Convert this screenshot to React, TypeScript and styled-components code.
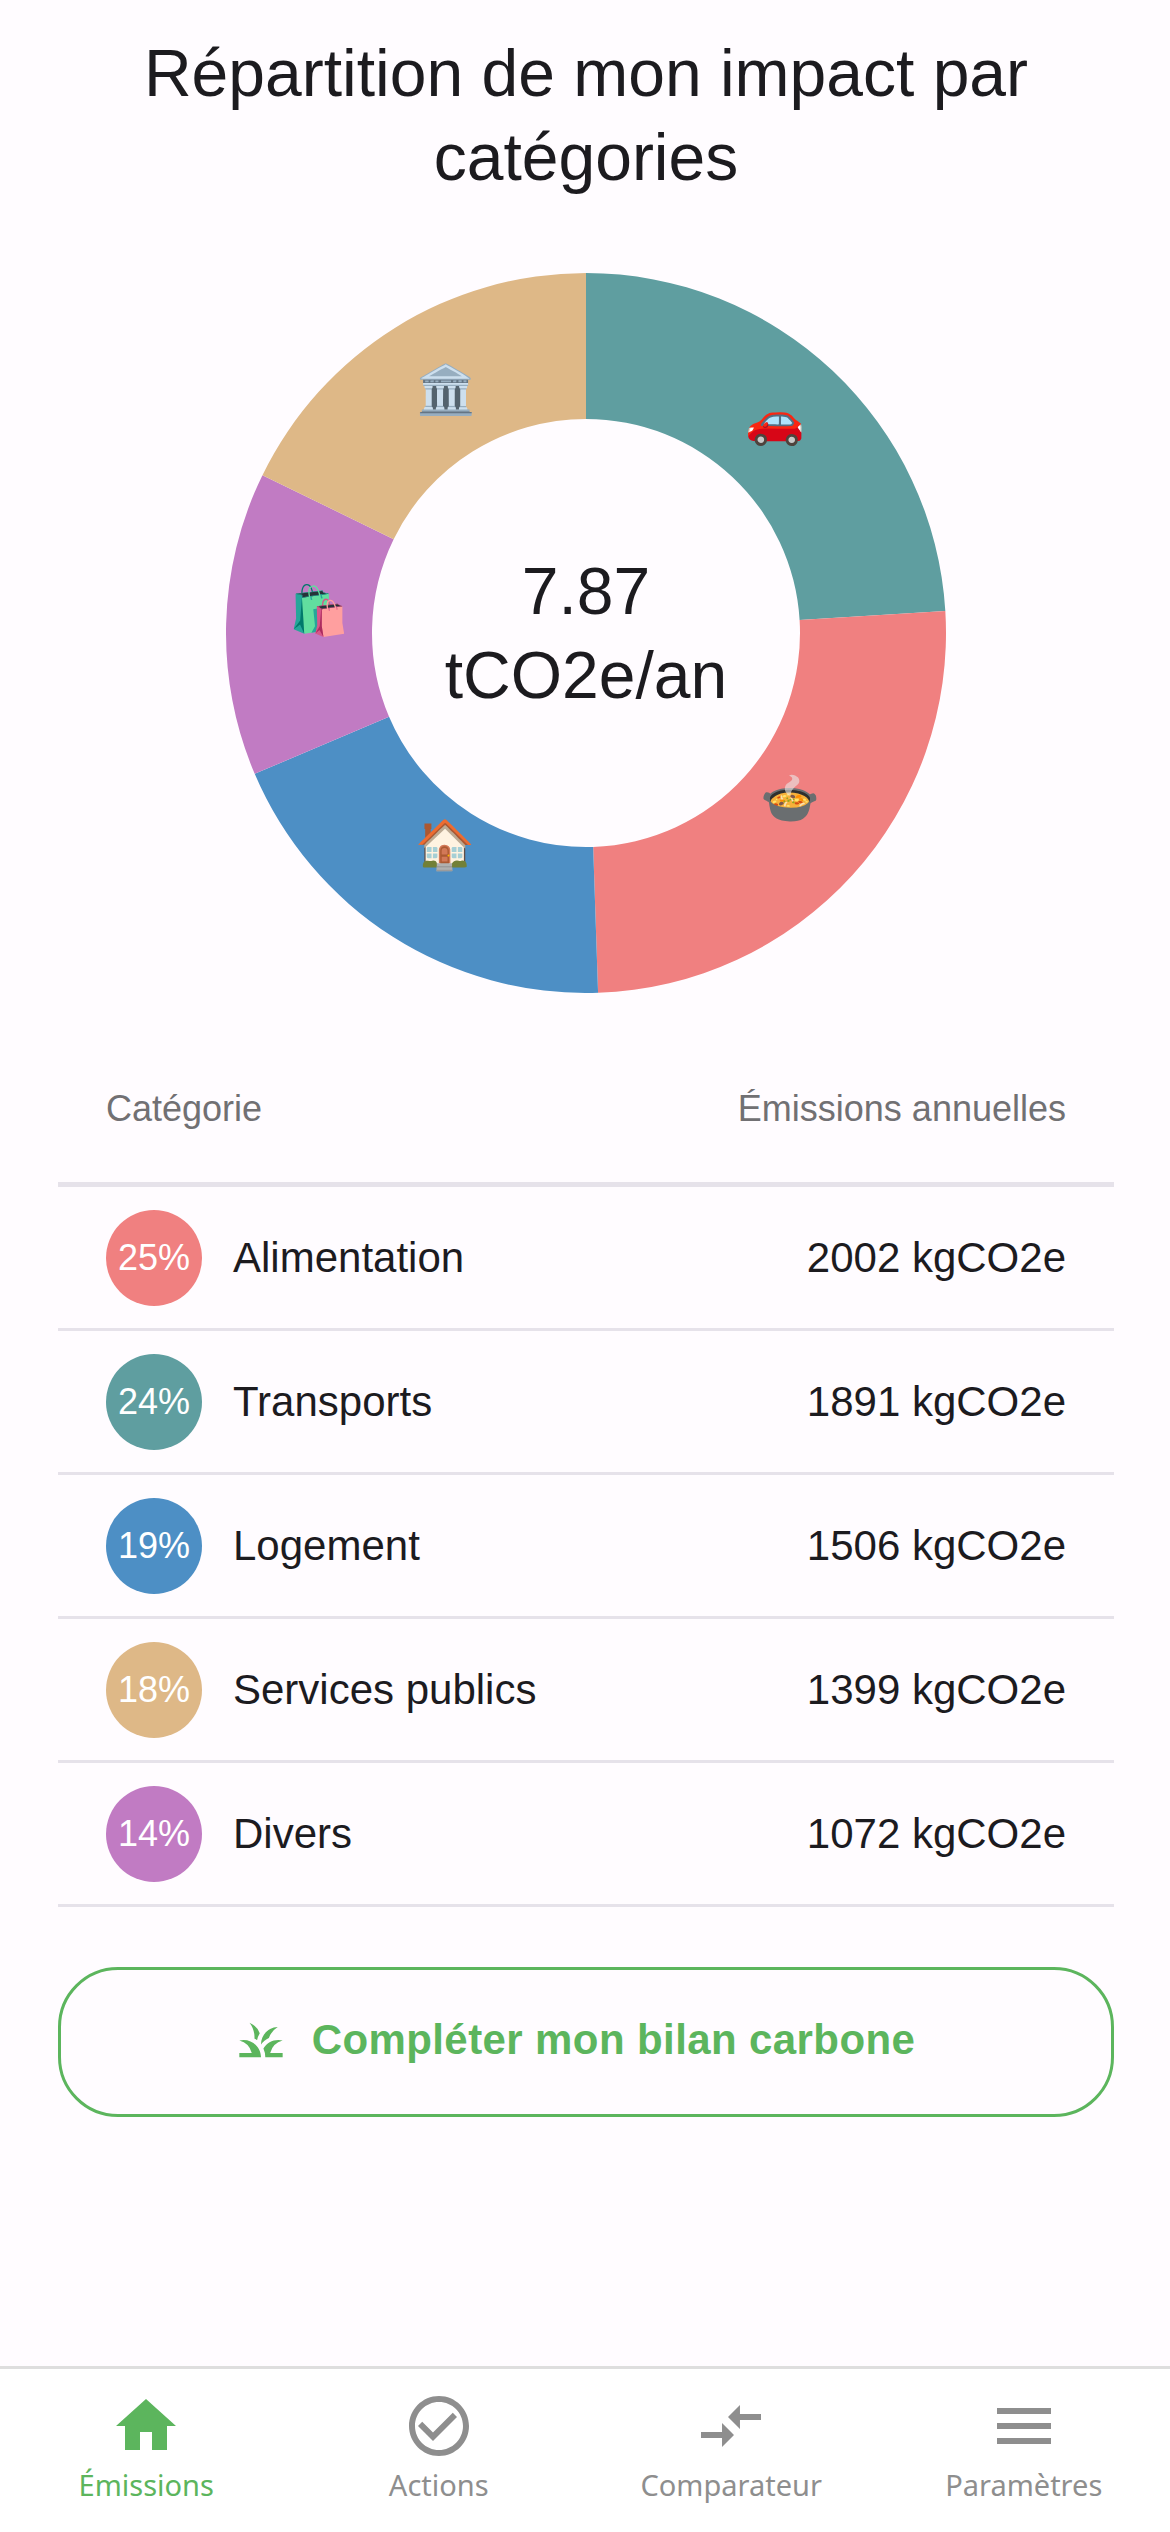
import React from "react";
import styled, { createGlobalStyle } from "styled-components";
import {
  MdCheckCircleOutline,
  MdCompareArrows,
  MdGrass,
  MdHome,
  MdMenu,
} from "react-icons/md";

const GREEN = "#5cb55d";
const GREY = "#8e8e8e";
const LINE = "#e6e2ea";

const CX = 360;
const CY = 360;
const OUTER = 360;
const INNER = 214;

const slices = [
  { value: 1891, color: "#5f9ea0", emoji: "🚗", x: 549, y: 146 },
  { value: 2002, color: "#f08080", emoji: "🍲", x: 564, y: 525 },
  { value: 1506, color: "#4d8fc5", emoji: "🏠", x: 219, y: 571 },
  { value: 1072, color: "#c17bc3", emoji: "🛍️", x: 93, y: 337 },
  { value: 1399, color: "#deb887", emoji: "🏛️", x: 220, y: 116 },
];

const rows = [
  { pct: "25%", color: "#f08080", name: "Alimentation", value: "2002 kgCO2e" },
  { pct: "24%", color: "#5f9ea0", name: "Transports", value: "1891 kgCO2e" },
  { pct: "19%", color: "#4d8fc5", name: "Logement", value: "1506 kgCO2e" },
  { pct: "18%", color: "#deb887", name: "Services publics", value: "1399 kgCO2e" },
  { pct: "14%", color: "#c17bc3", name: "Divers", value: "1072 kgCO2e" },
];

const tabs = [
  { label: "Émissions", Icon: MdHome, active: true },
  { label: "Actions", Icon: MdCheckCircleOutline, active: false },
  { label: "Comparateur", Icon: MdCompareArrows, active: false },
  { label: "Paramètres", Icon: MdMenu, active: false },
];

const point = (radius: number, angle: number) => {
  const rad = (angle * Math.PI) / 180;
  return `${CX + radius * Math.sin(rad)} ${CY - radius * Math.cos(rad)}`;
};

const arc = (start: number, end: number) => {
  const large = end - start > 180 ? 1 : 0;
  return [
    `M ${point(OUTER, start)}`,
    `A ${OUTER} ${OUTER} 0 ${large} 1 ${point(OUTER, end)}`,
    `L ${point(INNER, end)}`,
    `A ${INNER} ${INNER} 0 ${large} 0 ${point(INNER, start)}`,
    "Z",
  ].join(" ");
};

const Donut = () => {
  const total = slices.reduce((sum, s) => sum + s.value, 0);
  let angle = 0;
  return (
    <ChartSvg viewBox="0 0 720 720">
      {slices.map((s) => {
        const start = angle;
        angle += (s.value / total) * 360;
        return <path key={s.color} d={arc(start, angle)} fill={s.color} />;
      })}
      {slices.map((s) => (
        <EmojiText key={s.emoji} x={s.x} y={s.y} textAnchor="middle" dominantBaseline="central">
          {s.emoji}
        </EmojiText>
      ))}
    </ChartSvg>
  );
};

export default function App() {
  return (
    <>
      <GlobalStyle />
      <Page>
        <Main>
          <Title>Répartition de mon impact par catégories</Title>
          <Chart>
            <Donut />
            <ChartLabel>
              7.87
              <br />
              tCO2e/an
            </ChartLabel>
          </Chart>
          <Table>
            <TableHead>
              <span>Catégorie</span>
              <span>Émissions annuelles</span>
            </TableHead>
            {rows.map((row) => (
              <Row key={row.name}>
                <Badge $color={row.color}>{row.pct}</Badge>
                <RowName>{row.name}</RowName>
                <span>{row.value}</span>
              </Row>
            ))}
          </Table>
          <CompleteButton>
            <MdGrass size={52} />
            Compléter mon bilan carbone
          </CompleteButton>
        </Main>
        <TabBar>
          {tabs.map(({ label, Icon, active }) => (
            <Tab key={label} $active={active}>
              <Icon size={72} />
              <TabLabel>{label}</TabLabel>
            </Tab>
          ))}
        </TabBar>
      </Page>
    </>
  );
}

const GlobalStyle = createGlobalStyle`
  html, body {
    margin: 0;
    padding: 0;
  }
  * {
    box-sizing: border-box;
  }
`;

const Page = styled.div`
  width: 1170px;
  height: 2532px;
  display: flex;
  flex-direction: column;
  background: #fffcff;
  color: #1c1b1f;
  font-family: "Liberation Sans", Arial, sans-serif;
`;

const Main = styled.main`
  flex: 1;
  padding: 31px 56px 0 58px;
`;

const Title = styled.h1`
  margin: 0 auto;
  width: 940px;
  font-size: 66px;
  line-height: 84px;
  font-weight: 400;
  text-align: center;
`;

const Chart = styled.div`
  position: relative;
  width: 720px;
  height: 720px;
  margin: 74px auto 0;
`;

const ChartSvg = styled.svg`
  display: block;
  width: 100%;
  height: 100%;
`;

const EmojiText = styled.text`
  font-size: 48px;
`;

const ChartLabel = styled.div`
  position: absolute;
  top: 50%;
  left: 50%;
  transform: translate(-50%, -50%);
  font-size: 66px;
  line-height: 84px;
  text-align: center;
  white-space: nowrap;
`;

const Table = styled.section`
  font-size: 42px;
`;

const TableHead = styled.div`
  height: 122px;
  margin-top: 72px;
  padding: 0 48px 30px;
  display: flex;
  align-items: center;
  justify-content: space-between;
  border-bottom: 5px solid ${LINE};
  font-size: 36px;
  color: #717073;
`;

const Row = styled.div`
  height: 144px;
  padding: 0 48px;
  display: flex;
  align-items: center;
  border-bottom: 3px solid ${LINE};
`;

const Badge = styled.div<{ $color: string }>`
  width: 96px;
  height: 96px;
  border-radius: 50%;
  display: flex;
  align-items: center;
  justify-content: center;
  background: ${(p) => p.$color};
  color: #fff;
  font-size: 36px;
`;

const RowName = styled.span`
  flex: 1;
  margin-left: 31px;
`;

const CompleteButton = styled.button`
  width: 100%;
  height: 150px;
  margin-top: 60px;
  padding: 0 22px 4px 0;
  display: flex;
  align-items: center;
  justify-content: center;
  gap: 25px;
  background: transparent;
  border: 3px solid ${GREEN};
  border-radius: 60px;
  color: ${GREEN};
  font-family: inherit;
  font-size: 42px;
  font-weight: 700;
  letter-spacing: 0.4px;
`;

const TabBar = styled.nav`
  height: 166px;
  display: grid;
  grid-template-columns: repeat(4, 1fr);
  padding-top: 21px;
  background: #fff;
  border-top: 3px solid #dedede;
`;

const Tab = styled.div<{ $active: boolean }>`
  display: flex;
  flex-direction: column;
  align-items: center;
  color: ${(p) => (p.$active ? GREEN : GREY)};
`;

const TabLabel = styled.span`
  margin-top: 3px;
  font-family: "Noto Sans", sans-serif;
  font-size: 29px;
  line-height: 40px;
`;
